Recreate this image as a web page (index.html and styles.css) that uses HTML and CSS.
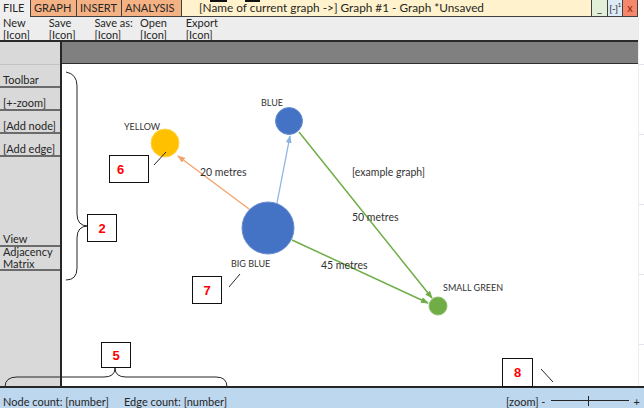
FILE: index.html
```html
<!DOCTYPE html>
<html>
<head>
<meta charset="utf-8">
<link rel="stylesheet" href="styles.css">
</head>
<body>
<div class="page">
  <div class="upper">
    <div class="app">
      <header class="topbar">
        <div class="tab file">FILE</div>
        <div class="tab menu">GRAPH</div>
        <div class="tab menu insert">INSERT</div>
        <div class="tab menu analysis">ANALYSIS</div>
        <div class="title"><span class="mark m1"></span><span class="mark m2"></span>[Name of current graph -&gt;] Graph #1 - Graph *Unsaved</div>
        <div class="wbtn min">_</div>
        <div class="wbtn restore">[-]<sup>1</sup></div>
        <div class="wbtn close">x</div>
      </header>
      <nav class="toolbar">
        <div class="tool"><span>New</span><span>[Icon]</span></div>
        <div class="tool"><span>Save</span><span>[Icon]</span></div>
        <div class="tool"><span>Save as:</span><span>[Icon]</span></div>
        <div class="tool"><span>Open</span><span>[Icon]</span></div>
        <div class="tool"><span>Export</span><span>[Icon]</span></div>
      </nav>
      <div class="main">
        <aside class="sidebar">
          <div class="cell blank first"></div>
          <div class="cell">Toolbar</div>
          <div class="cell">[+-zoom]</div>
          <div class="cell">[Add node]</div>
          <div class="cell">[Add edge]</div>
          <div class="spacer"></div>
          <div class="cell">View</div>
          <div class="cell two">Adjacency<br>Matrix</div>
        </aside>
        <section class="workspace">
          <div class="band"></div>
          <div class="canvas">
            <svg class="graph" viewBox="62 64 576 322" width="576" height="322">
              <defs>
                <marker id="ao" markerUnits="userSpaceOnUse" markerWidth="8" markerHeight="6" refX="7" refY="3" orient="auto"><path d="M0,0 L8,3 L0,6 z" fill="#f4a36b"/></marker>
                <marker id="ab" markerUnits="userSpaceOnUse" markerWidth="8" markerHeight="6" refX="7" refY="3" orient="auto"><path d="M0,0 L8,3 L0,6 z" fill="#8db4e2"/></marker>
                <marker id="ag" markerUnits="userSpaceOnUse" markerWidth="8" markerHeight="6" refX="7" refY="3" orient="auto"><path d="M0,0 L8,3 L0,6 z" fill="#70ad47"/></marker>
              </defs>
              <line x1="249" y1="209" x2="178" y2="156" stroke="#f4a36b" stroke-width="1.3" marker-end="url(#ao)"/>
              <line x1="277" y1="203" x2="290" y2="136" stroke="#8db4e2" stroke-width="1.3" marker-end="url(#ab)"/>
              <line x1="299" y1="132" x2="432" y2="298" stroke="#70ad47" stroke-width="1.5" marker-end="url(#ag)"/>
              <line x1="292" y1="240" x2="428" y2="303" stroke="#70ad47" stroke-width="1.5" marker-end="url(#ag)"/>
              <circle cx="165" cy="143" r="14" fill="#ffc000" stroke="#ffd34d" stroke-width="1"/>
              <circle cx="289" cy="121" r="13.5" fill="#4472c4" stroke="#6a8fd2" stroke-width="1"/>
              <circle cx="268" cy="228" r="26" fill="#4472c4" stroke="#6a8fd2" stroke-width="1"/>
              <circle cx="438" cy="306" r="9" fill="#70ad47" stroke="#8cc06a" stroke-width="1"/>
              <text class="nlabel" x="124" y="130">YELLOW</text>
              <text class="nlabel" x="261" y="106">BLUE</text>
              <text class="nlabel" x="231" y="267">BIG BLUE</text>
              <text class="nlabel" x="443" y="291">SMALL GREEN</text>
              <text class="elabel" x="200" y="175.5">20 metres</text>
              <text class="elabel" x="352" y="175.5">[example graph]</text>
              <text class="elabel" x="352" y="220.5">50 metres</text>
              <text class="elabel" x="321" y="268.5">45 metres</text>
            </svg>
          </div>
        </section>
      </div>
    </div>
    <div class="gutter"></div>
  </div>
  <footer class="status">
    <span class="count">Node count: [number]</span>
    <span class="count">Edge count: [number]</span>
    <span class="zoom">[zoom] -</span>
    <span class="slider"><span class="knob"></span></span>
    <span class="plus">+</span>
  </footer>

  <svg class="notes" width="644" height="408" viewBox="0 0 644 408">
    <path d="M66,72 Q77,74 77,86 L77,214 Q77,226 88,226 Q77,226 77,238 L77,268 Q77,280 66,280" fill="none" stroke="#262626" stroke-width="1"/>
    <path d="M5,387 Q5,377 17,377 L104,377 Q115,377 115,368 Q115,377 126,377 L216,377 Q227,377 227,387" fill="none" stroke="#262626" stroke-width="1"/>
    <line x1="154" y1="165" x2="166" y2="152" stroke="#262626" stroke-width="1"/>
    <line x1="229" y1="287" x2="240" y2="274" stroke="#262626" stroke-width="1"/>
    <line x1="541" y1="369" x2="553" y2="382" stroke="#262626" stroke-width="1"/>
  </svg>
  <div class="note n6">6</div>
  <div class="note n2">2</div>
  <div class="note n7">7</div>
  <div class="note n5">5</div>
  <div class="note n8">8</div>
</div>
</body>
</html>
```
FILE: styles.css
```css
* { box-sizing: border-box; }
html, body { margin: 0; padding: 0; background: #fff; }
body {
  font-family: Lato, "Open Sans", sans-serif;
  font-size: 11px;
  color: #262626;
}
.page {
  position: relative;
  width: 644px;
  height: 408px;
  overflow: hidden;
  display: flex;
  flex-direction: column;
}
.upper { display: flex; height: 386px; }
.app { width: 638px; display: flex; flex-direction: column; }
.gutter {
  width: 6px;
  margin-top: 17px;
  border-left: 1px solid #ececec;
  background: repeating-linear-gradient(to bottom, transparent 0, transparent 47px, #e3e3ee 47px, #e3e3ee 48px, transparent 48px, transparent 70px);
}

/* top bar */
.topbar { display: flex; height: 17px; line-height: 16px; }
.tab { padding: 0 3px; }
.file { width: 30px; background: #efefef; }
.menu {
  background: #f4b183;
  border: 1px solid #404040;
  border-top: none;
  border-left: none;
  width: 47px;
}
.tab.menu:nth-child(2) { border-left: 1px solid #404040; width: 47px; }
.insert { width: 45px; }
.analysis { width: 60px; }
.title {
  position: relative;
  flex: 1;
  background: #fff2cc;
  border-bottom: 1px solid #404040;
  border-right: 1px solid #404040;
  padding-left: 17px;
  font-size: 11.8px;
  white-space: nowrap;
}
.mark { position: absolute; top: 0; height: 2px; background: #111; }
.m1 { left: 28px; width: 17px; }
.m2 { left: 63px; width: 15px; }
.wbtn {
  width: 15px;
  text-align: center;
  border-bottom: 1px solid #404040;
  border-right: 1px solid #404040;
}
.min { width: 16px; background: #e2f0d9; }
.restore { background: #ddebf7; font-size: 10px; letter-spacing: -0.5px; }
.restore sup { font-size: 6px; vertical-align: 5px; line-height: 0; }
.close { width: 15px; background: #f5876c; color: #a01c00; }

/* toolbar */
.toolbar {
  display: flex;
  height: 23px;
  background: #ededed;
  padding-left: 3px;
  line-height: 12px;
}
.tool { width: 45.7px; display: flex; flex-direction: column; white-space: nowrap; }

/* main */
.main {
  flex: 1;
  display: flex;
  border-top: 2px solid #2a2a2a;
}
.sidebar {
  width: 62px;
  background: #d9d9d9;
  border-right: 2px solid #262626;
  display: flex;
  flex-direction: column;
}
.cell {
  height: 23px;
  border-bottom: 2px solid #6b6b6b;
  display: flex;
  align-items: flex-end;
  padding-left: 3px;
  line-height: 12px;
  white-space: nowrap;
}
.cell.first { height: 23px; border-bottom: 1px solid #c4c4c4; }
.cell.two { line-height: 11.5px; height: 24px; }
.spacer { height: 67px; }
.workspace { flex: 1; display: flex; flex-direction: column; }
.band { height: 22px; background: #808080; border-bottom: 1px solid #2e2e2e; }
.canvas { position: relative; flex: 1; background: #fff; }
.graph { position: absolute; left: 0; top: 0; }
.nlabel { font-family: Lato, sans-serif; font-size: 9px; fill: #333; }
.elabel { font-family: Lato, sans-serif; font-size: 10.5px; fill: #333; }

/* status */
.status {
  height: 22px;
  border-top: 2px solid #262626;
  background: #bdd7ee;
  display: flex;
  align-items: flex-start;
  padding: 8px 0 0 3px;
  line-height: 12px;
  white-space: nowrap;
}
.count { width: 121px; }
.zoom { margin-left: 261px; }
.slider {
  position: relative;
  width: 78px;
  height: 1px;
  margin: 4px 0 0 6px;
  background: #262626;
}
.knob { position: absolute; left: 37px; top: -4px; width: 1px; height: 10px; background: #262626; }
.plus { margin-left: 4px; }

/* annotations */
.notes { position: absolute; left: 0; top: 0; pointer-events: none; }
.note {
  position: absolute;
  background: #fff;
  border: 1px solid #111;
  color: #ff0000;
  font-family: "Liberation Sans", Arial, sans-serif;
  font-weight: bold;
  font-size: 13px;
  display: flex;
  align-items: center;
  justify-content: center;
}
.n6 { left: 109px; top: 155px; width: 40px; height: 28px; justify-content: flex-start; padding-left: 7px; }
.n2 { left: 87px; top: 214px; width: 30px; height: 28px; }
.n7 { left: 192px; top: 276px; width: 30px; height: 28px; }
.n5 { left: 101px; top: 342px; width: 30px; height: 26px; }
.n8 { left: 502px; top: 358px; width: 31px; height: 29px; }
```
